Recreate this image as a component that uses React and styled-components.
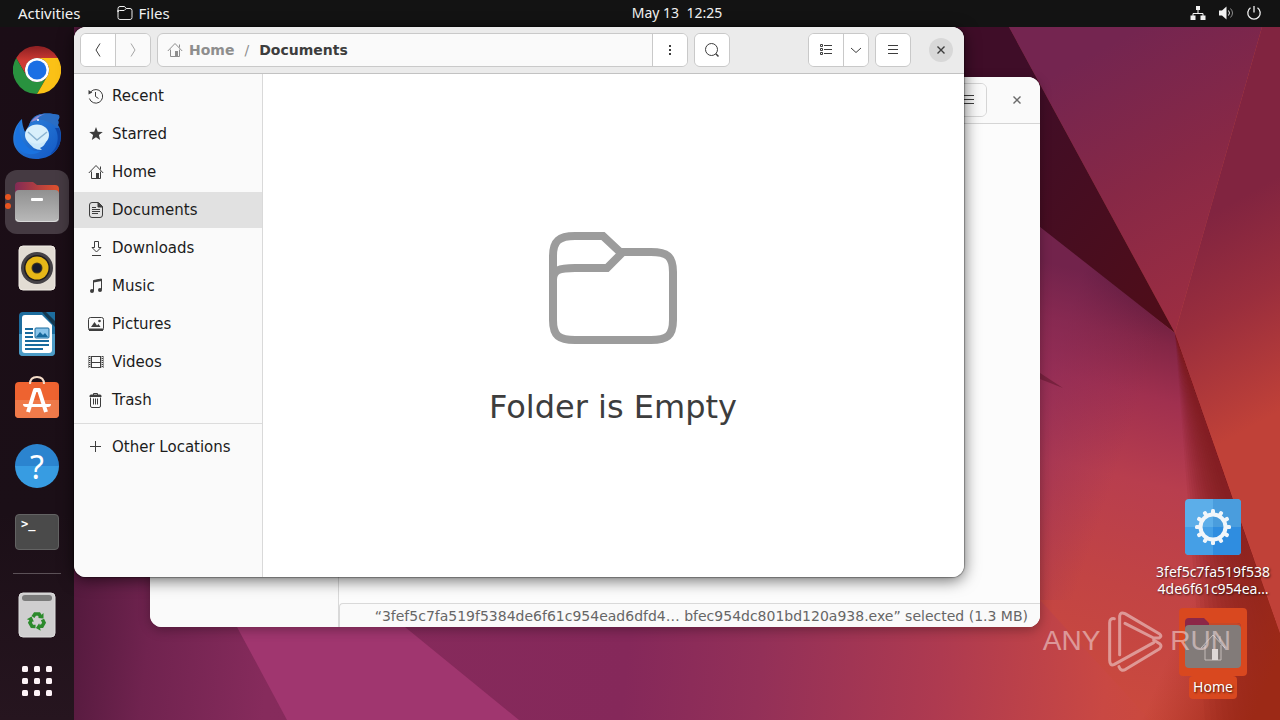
import React from 'react'
import styled, { createGlobalStyle } from 'styled-components'

const GlobalStyle = createGlobalStyle`
  * {
    box-sizing: border-box;
  }
  body {
    margin: 0;
    overflow: hidden;
    font-family: 'DejaVu Sans', sans-serif;
    font-size: 15px;
  }
  button {
    border: none;
    padding: 0;
    background: none;
    color: inherit;
    font: inherit;
  }
  a {
    color: inherit;
    text-decoration: none;
  }
  svg {
    display: block;
    flex-shrink: 0;
  }
`

const Screen = styled.div`
  position: relative;
  display: flex;
  flex-direction: column;
  height: 100vh;
  overflow: hidden;
`

const TopBar = styled.header`
  position: relative;
  display: grid;
  grid-template-columns: 1fr auto 1fr;
  align-items: center;
  height: 27px;
  padding: 0 18px 2px;
  background: #131313;
  color: #f2f2f2;
  font-family: 'Noto Sans', sans-serif;
  font-size: 15px;
  line-height: 20px;
`

const BarGroup = styled.div`
  display: flex;
  align-items: center;
  justify-content: ${({ $end }) => ($end ? 'flex-end' : 'flex-start')};
  gap: ${({ $end }) => ($end ? '12px' : '36px')};
`

const BarButton = styled.button`
  display: flex;
  align-items: center;
  gap: 6px;
`

const Clock = styled(BarButton)`
  margin-left: 74px;
  font-size: 14px;
  white-space: pre;
`

const Body = styled.div`
  position: relative;
  display: flex;
  flex: 1;
  min-height: 0;
`

const Dock = styled.nav`
  display: flex;
  flex-direction: column;
  align-items: center;
  gap: 2px;
  width: 74px;
  padding-top: 11px;
  background: linear-gradient(#1b0d16, #1b0f17 70%, #26151f);
`

const DockButton = styled.button`
  position: relative;
  display: flex;
  align-items: center;
  justify-content: center;
  width: 64px;
  height: 64px;
  border-radius: 12px;
  background: ${({ $active }) => ($active ? '#453a42' : 'transparent')};
`

const RunningDots = styled.span`
  position: absolute;
  left: 0;
  top: 24px;
  display: flex;
  flex-direction: column;
  gap: 3px;

  i {
    width: 6px;
    height: 6px;
    border-radius: 50%;
    background: #e95420;
  }
`

const DockLine = styled.hr`
  width: 48px;
  height: 1px;
  margin: 7px 0;
  border: none;
  background: #5b5157;
`

const Desktop = styled.main`
  position: relative;
  flex: 1;
`

const Wallpaper = styled.svg`
  position: absolute;
  inset: 0;
  width: 100%;
  height: 100%;
`

const Window = styled.section`
  position: absolute;
  left: ${({ $back }) => ($back ? '76px' : '0')};
  top: ${({ $back }) => ($back ? '50px' : '0')};
  display: flex;
  flex-direction: column;
  width: 890px;
  height: 550px;
  border-radius: 12px;
  overflow: hidden;
  background: #fff;
  color: #3d3d3d;
  box-shadow: ${({ $back }) =>
    $back
      ? '0 3px 12px rgba(0, 0, 0, 0.3)'
      : '0 0 1px 1px rgba(0, 0, 0, 0.3), 0 3px 16px rgba(0, 0, 0, 0.6)'};
`

const HeaderBar = styled.div`
  display: flex;
  align-items: center;
  gap: 6px;
  height: 47px;
  padding: 0 11px 0 6px;
  border-bottom: 1px solid ${({ $back }) => ($back ? '#d5d5d5' : '#c2c2c2')};
  background: ${({ $back }) => ($back ? '#fafafa' : '#ebebeb')};
`

const Group = styled.div`
  display: flex;
  flex: ${({ $grow }) => ($grow ? '0 1 531px' : 'none')};
  height: 34px;
  border: 1px solid ${({ $back }) => ($back ? '#d5d5d5' : '#c9c9c9')};
  border-radius: 6px;
  overflow: hidden;
  background: #fafafa;
`

const ToolButton = styled.button`
  box-sizing: content-box;
  display: flex;
  align-items: center;
  justify-content: center;
  width: ${({ $narrow }) => ($narrow ? '24px' : '34px')};
  background: ${({ $flat }) => ($flat ? '#fafafa' : '#fff')};
  color: ${({ disabled }) => (disabled ? '#a5a5a5' : '#3d3d3d')};

  &:not(:first-child) {
    border-left: 1px solid #c9c9c9;
  }
`

const Path = styled.div`
  display: flex;
  flex: 1;
  align-items: center;
  gap: 10px;
  padding-left: 9px;
  color: #8e8e8e;
  font-size: 14px;
  font-weight: 700;

  a {
    display: flex;
    align-items: center;
    gap: 6px;
  }
  span {
    font-weight: 400;
  }
  a:last-child {
    color: #3d3d3d;
  }
`

const Spacer = styled.div`
  flex: 1;
`

const CloseButton = styled.button`
  display: flex;
  align-items: center;
  justify-content: center;
  width: 24px;
  height: 24px;
  margin-left: 12px;
  border-radius: 50%;
  background: ${({ $back }) => ($back ? 'transparent' : '#d8d8d8')};
  color: ${({ $back }) => ($back ? '#6b6b6b' : '#3d3d3d')};
`

const Columns = styled.div`
  display: flex;
  flex: 1;
  min-height: 0;
`

const Sidebar = styled.nav`
  display: flex;
  flex-direction: column;
  gap: 2px;
  width: 189px;
  padding-top: 4px;
  border-right: 1px solid #d9d9d9;
  background: #fafafa;
`

const Place = styled.button`
  display: flex;
  align-items: center;
  gap: 8px;
  height: 36px;
  padding-left: 14px;
  background: ${({ $active }) => ($active ? '#e1e1e1' : 'transparent')};
  color: #1c1c1c;
  text-align: left;

  svg {
    color: #3d3d3d;
  }
`

const SideLine = styled.hr`
  width: 100%;
  height: 1px;
  margin: 3px 0;
  border: none;
  background: #dcdcdc;
`

const Pane = styled.div`
  display: flex;
  flex: 1;
  flex-direction: column;
  align-items: center;
  justify-content: ${({ $back }) => ($back ? 'flex-end' : 'center')};
  gap: 36px;
  min-width: 0;
  padding: ${({ $back }) => ($back ? '0' : '0 1px 1px 0')};
  background: ${({ $back }) => ($back ? '#fcfcfc' : '#fff')};
`

const EmptyText = styled.p`
  margin: 0;
  font-size: 32px;
  line-height: 38px;
`

const StatusBar = styled.div`
  display: flex;
  align-items: center;
  justify-content: flex-end;
  align-self: stretch;
  height: 24px;
  padding: 0 12px;
  border: solid #d9d9d9;
  border-width: 1px 0 0 1px;
  border-top-left-radius: 4px;
  background: #fafafa;
  color: #666;
  font-size: 14px;
  white-space: nowrap;
`

const DesktopIcons = styled.div`
  position: absolute;
  right: 3px;
  bottom: 21px;
  display: flex;
  flex-direction: column;
  gap: 11px;
  width: 128px;
`

const DesktopItem = styled.button`
  display: flex;
  flex-direction: column;
  align-items: center;
  gap: ${({ $selected }) => ($selected ? '0' : '8px')};
  color: #fff;
  font-family: 'Noto Sans', sans-serif;
  font-size: 14px;
  line-height: 17px;
  text-shadow: 1px 1px 2px rgba(0, 0, 0, 0.7);
`

const IconBox = styled.span`
  padding: ${({ $selected }) => ($selected ? '6px' : '0')};
  border-radius: 4px;
  background: ${({ $selected }) => ($selected ? '#d9481f' : 'transparent')};
`

const IconLabel = styled.span`
  padding: ${({ $selected }) => ($selected ? '2px 4px 4px' : '0')};
  border-radius: 4px;
  background: ${({ $selected }) => ($selected ? '#d9481f' : 'transparent')};
`

const Watermark = styled.div`
  position: absolute;
  right: 49px;
  bottom: 48px;
  display: flex;
  align-items: center;
  gap: 7px;
  color: #f3dcdc;
  font-family: 'Liberation Sans', sans-serif;
  font-size: 28px;
  line-height: 62px;
  opacity: 0.55;
  pointer-events: none;
`

// symbolic 16px icons, all drawn with currentColor
const glyphs = {
  back: <path d="M10 1.500 6 8l4 6.500" />,
  forward: <path d="M6 1.500 10 8l-4 6.500" />,
  home: (
    <>
      <path d="M.8 9 8 1.500 15.200 9M12.500 2.500v3M3.500 7.500v7h9v-7" />
      <path d="M8 9h3v6H8z" fill="currentColor" stroke="none" />
    </>
  ),
  dots: <path d="M7 3h2v2H7zM7 7h2v2H7zM7 11h2v2H7z" fill="currentColor" stroke="none" />,
  search: (
    <>
      <circle cx="7.500" cy="7.500" r="6" />
      <path d="m11.800 11.800 2.700 2.700" strokeWidth="1.500" />
    </>
  ),
  list: <path d="M2.500 2.500h2v2h-2zM2.500 6.500h2v2h-2zM2.500 10.500h2v2h-2zM6 3.500h8M6 7.500h8M6 11.500h8" />,
  down: <path d="m3 6 5 4.500L13 6" />,
  menu: <path d="M3 3.500h10M3 7.500h10M3 11.500h10" />,
  close: <path d="m4.500 4.500 7 7M11.500 4.500l-7 7" strokeWidth="1.400" />,
  recent: (
    <>
      <path d="M2.800 3.800A6.800 6.800 0 1 1 1.400 10.500" />
      <path d="M7.500 4v4.500l3 2" />
      <path d="M.5 2v4.500l3.800-2z" fill="currentColor" stroke="none" />
    </>
  ),
  star: (
    <path
      d="m8 1 1.800 4.700 5 .2-3.900 3.200 1.300 4.900L8 11.200 3.800 14l1.300-4.900L1.200 5.900l5-.2z"
      fill="currentColor"
      stroke="none"
    />
  ),
  documents: (
    <>
      <path d="M4 .5h6.500l4 4V13q0 2.500-2.500 2.500H4q-2.500 0-2.500-2.500V3Q1.500.5 4 .5z" />
      <path d="M10 1v4h4.500z" fill="currentColor" />
      <path d="M4 5.500h4M4 7.500h8M4 9.500h8M4 11.500h6" />
    </>
  ),
  downloads: <path d="M6.500 1.500h4v6H13l-4.500 4.500L4 7.500h2.500zM4 15.500h9" />,
  music: (
    <>
      <path d="M5.500 13V2.500l8-1.500v10.500" />
      <path d="m5.500 3.500 8-1.500" strokeWidth="2" />
      <circle cx="4" cy="13" r="2" fill="currentColor" stroke="none" />
      <circle cx="12" cy="12" r="2" fill="currentColor" stroke="none" />
    </>
  ),
  pictures: (
    <>
      <rect x=".5" y="1.500" width="15" height="13" rx="2" />
      <path d="M1 12.500h14V15H1zM3 11l3.500-5L9 9.500l1.500-1.500L12.500 11z" fill="currentColor" stroke="none" />
      <circle cx="11.500" cy="5" r="1.300" fill="currentColor" stroke="none" />
    </>
  ),
  videos: (
    <>
      <path d="M3.500 2v12M12.500 2v12M3.500 2.500h9M3.500 8.500h9M3.500 13.500h9" />
      <path d="M1.500 2v12M14.500 2v12" strokeWidth="2" />
      <path d="M1.800 3v11M14.200 3v11" stroke="#fafafa" strokeWidth="1.400" strokeDasharray="1 1" />
    </>
  ),
  trash: (
    <>
      <path d="M2.500 5.500V14q0 1.500 1.500 1.500h7q1.500 0 1.500-1.500V5.500M5.500 6.500v6M7.500 6.500v6M9.500 6.500v6" />
      <path d="M5.500 3V1.500h4V3" />
      <path d="M1.500 5V4q0-1.500 1.500-1.500h9q1.500 0 1.500 1.500v1z" fill="currentColor" stroke="none" />
    </>
  ),
  plus: <path d="M7.500 2v11M2 7.500h11" />,
  folder: (
    <path d="M1 5v7.500q0 2 2 2h10q2 0 2-2V5.500q0-2-2-2H9.200L7.500 1.500H3q-2 0-2 2V7q0-1.500 1.500-1.500h4.700L9.200 3.500" />
  ),
  network: (
    <>
      <path d="M8 5v3M3 11V8.500h10V11" />
      <path d="M6 1h4v4H6zM.5 10.500h5V15h-5zM10.500 10.500h5V15h-5z" fill="currentColor" stroke="none" />
    </>
  ),
  volume: (
    <>
      <path d="M1 5.500h3L8.500 1.500v13L4 10.500H1z" fill="currentColor" stroke="none" />
      <path d="M10.500 5.500q2 2.500 0 5" />
      <path d="M12.500 3.500q4 4.500 0 9" opacity=".55" />
    </>
  ),
  power: <path d="M8 1v6.500M4.500 2.800a6.200 6.200 0 1 0 7 0" strokeWidth="1.300" />,
}

const Glyph = ({ name }) => (
  <svg width="16" height="16" viewBox="0 0 16 16" fill="none" stroke="currentColor" aria-hidden="true">
    {glyphs[name]}
  </svg>
)

const ChromeIcon = () => (
  <svg width="48" height="48" viewBox="0 0 48 48">
    <defs>
      <linearGradient id="chromeRed" x1="0" y1="0" x2="0" y2="1">
        <stop offset="0" stopColor="#8b1f22" />
        <stop offset=".5" stopColor="#cf3a33" />
      </linearGradient>
    </defs>
    <path d="M3.200 12A24 24 0 0 1 44.800 12H24a12 12 0 0 0-10.400 18z" fill="url(#chromeRed)" />
    <path d="M3.200 12l10.400 18a12 12 0 0 0 20.800 0L24 48A24 24 0 0 1 3.200 12z" fill="#29923f" />
    <path d="M24 12h20.800A24 24 0 0 1 24 48l10.400-18A12 12 0 0 0 24 12z" fill="#fbc116" />
    <circle cx="24" cy="24" r="12" fill="#fff" />
    <circle cx="24" cy="24" r="9.500" fill="#1b6fe4" />
  </svg>
)

const ThunderbirdIcon = () => (
  <svg width="48" height="48" viewBox="0 0 48 48">
    <defs>
      <linearGradient id="bird" x1="0" y1="0" x2="1" y2="1">
        <stop offset="0" stopColor="#2f86dd" />
        <stop offset="1" stopColor="#1257c4" />
      </linearGradient>
    </defs>
    <path d="M9 7C1 14-2 27 2 35c4 8 12 12 21 12 14 0 25-9 25-23 0-5-1-8-3-11 1-2 1-3 0-5q2-2 1-5C41 2 34 1 29 2 21 3 18 8 16 13l-4 7C10 15 9 11 9 7z" fill="url(#bird)" />
    <path d="M46 3C41 2 34 1 29 2 21 3 18 8 16 13q8-8 17-4 8 3 12 8l0-9q2-2 1-5z" fill="#2a6dc4" />
    <path d="M18 10q4-7 14-8-7 2-8 6z" fill="#8f8cd4" />
    <path d="M9 7C5 15 6 25 11 31c4 6 10 9 17 8-9 6-20 3-24-5C0 26 3 13 9 7z" fill="#1a73e0" />
    <path d="M42 16c5 8 3 20-5 26 10-3 13-16 9-26z" fill="#0e48ab" />
    <ellipse cx="24" cy="23" rx="12" ry="10.500" fill="#d8effb" />
    <path d="M14 28q9 7 19 1-1 5-6 7 0 0 2 2-10 0-15-10z" fill="#cbe8fa" />
    <path d="m15 20 9 8 10-8" fill="none" stroke="#8bb4d2" strokeWidth="1.500" />
    <circle cx="25" cy="8" r="1" fill="#fff" />
  </svg>
)

const FolderIcon = () => (
  <svg width="44" height="42" viewBox="0 0 44 42">
    <defs>
      <linearGradient id="tab" x1="0" x2="1">
        <stop offset="0" stopColor="#812a55" />
        <stop offset="1" stopColor="#e0522c" />
      </linearGradient>
      <linearGradient id="drawer" x1="0" y1="0" x2="0" y2="1">
        <stop offset="0" stopColor="#909090" />
        <stop offset="1" stopColor="#b9b9b9" />
      </linearGradient>
    </defs>
    <path d="M0 5q0-4 4-4h14l4 3h18q4 0 4 4v18H0z" fill="url(#tab)" />
    <rect y="9" width="44" height="32" rx="4" fill="url(#drawer)" />
    <path d="M1 38q1 2.500 4 2.500h34q3 0 4-2.500" fill="none" stroke="#dadada" />
    <rect x="16" y="17" width="12" height="3" rx="1" fill="#fff" />
  </svg>
)

const RhythmboxIcon = () => (
  <svg width="38" height="46" viewBox="0 0 38 46">
    <rect x="1" y="1" width="36" height="44" rx="4" fill="#e2dcd3" stroke="#f2ede6" />
    <circle cx="19" cy="23" r="16" fill="#454246" />
    <circle cx="19" cy="23" r="13" fill="#201d1f" />
    <circle cx="19" cy="23" r="11.500" fill="#e6b717" />
    <circle cx="19" cy="23" r="5.500" fill="#4a3d1c" />
    <circle cx="19" cy="23" r="4.500" fill="#161a2c" />
  </svg>
)

const WriterIcon = () => (
  <svg width="38" height="46" viewBox="0 0 38 46">
    <path d="M5 1h32v40q0 4-4 4H5q-4 0-4-4V5q0-4 4-4z" fill="#1d6d9e" />
    <path d="M1 23v18q0 4 4 4h28q4 0 4-4V23z" fill="#4c9bc6" />
    <path d="M24 1h4l9 9v6z" fill="#14384f" />
    <path d="M7 4h17l10 10v25q0 3-3 3H7q-3 0-3-3V7q0-3 3-3z" fill="#fff" />
    <path d="M7 18h8M7 22h8M7 26h8M7 30h24M7 34h24M7 38h18" stroke="#186a9d" strokeWidth="2" />
    <rect x="17" y="17" width="14" height="10" rx="1" fill="#8bc5ea" stroke="#186a9d" />
    <path d="m18 26 4-5 3 3 2-2 3 4z" fill="#186a9d" />
  </svg>
)

const SoftwareIcon = () => (
  <svg width="44" height="48" viewBox="0 0 44 48">
    <rect y="6" width="44" height="36" rx="4" fill="#ee6330" />
    <path d="M0 24h44v14q0 4-4 4H4q-4 0-4-4z" fill="#ef7a4a" />
    <path d="M15 8q0-7 7-7t7 7" fill="none" stroke="#f4dcc8" strokeWidth="2" />
    <path d="m13 36 7-22h4l7 22" fill="none" stroke="#fff" strokeWidth="4" strokeLinejoin="round" />
    <path d="M8 28h28q0 3-3 3H11q-3 0-3-3z" fill="#fff" />
  </svg>
)

const HelpText = styled.span`
  display: flex;
  align-items: center;
  justify-content: center;
  width: 44px;
  height: 44px;
  border-radius: 50%;
  background: linear-gradient(#2b84cf 50%, #379ce2 50%);
  color: #fff;
  font-family: 'Noto Sans', sans-serif;
  font-size: 32px;
`

const TerminalBox = styled.span`
  width: 44px;
  height: 36px;
  padding: 2px 5px;
  border: 1px solid #636363;
  border-radius: 4px;
  background: #4a4a4a;
  color: #fff;
  font-family: 'DejaVu Sans Mono', monospace;
  font-size: 12px;
  font-weight: 700;
  line-height: 14px;
  text-align: left;
`

const TrashIcon = () => (
  <svg width="38" height="46" viewBox="0 0 38 46">
    <rect x="1" y="1" width="36" height="44" rx="4" fill="#cfcecf" stroke="#dedede" />
    <rect x="4" y="3" width="30" height="6" rx="3" fill="#7b7b7b" />
    {[0, 120, 240].map((turn) => (
      <g key={turn} transform={`rotate(${turn} 19 29)`}>
        <path d="m15 25 2-3h4l1.500 2.500" fill="none" stroke="#2b8a2b" strokeWidth="3.500" />
        <path d="m20 26 5.500.5V21z" fill="#2b8a2b" />
      </g>
    ))}
  </svg>
)

const AppsIcon = () => (
  <svg width="30" height="30" viewBox="0 0 30 30" fill="#fdf3f7">
    {[0, 12, 24].map((y) => [0, 12, 24].map((x) => <rect key={`${x}-${y}`} x={x} y={y} width="6" height="6" rx="1.500" />))}
  </svg>
)

const GearIcon = () => (
  <svg width="56" height="56" viewBox="0 0 56 56">
    <rect width="56" height="56" rx="4" fill="#5caee9" />
    <path d="M28 0h24q4 0 4 4v24H28z" fill="#4a9ddd" />
    <path d="M28 28h28v24q0 4-4 4H28z" fill="#2f8de0" />
    <path d="M0 28h28v28H4q-4 0-4-4z" fill="#459fe6" />
    <circle cx="28" cy="28" r="12.500" fill="none" stroke="#f1f6fa" strokeWidth="4" />
    {[...Array(12)].map((_, i) => (
      <rect key={i} x="26" y="10" width="4" height="5" rx="1.500" fill="#f1f6fa" transform={`rotate(${i * 30} 28 28)`} />
    ))}
  </svg>
)

const HomeFolderIcon = () => (
  <svg width="56" height="56" viewBox="0 0 56 56">
    <path d="M0 8q0-4 4-4h15l5 5h28q4 0 4 4v12H0z" fill="#8c2747" />
    <path d="M24 9h28q4 0 4 4v8H24z" fill="#c74828" />
    <rect y="11" width="56" height="43" rx="4" fill="#827b79" />
    <path d="m16 34 12-13 12 13M35 22v6M20 31v15h16V31" fill="none" stroke="#c4bcb9" />
    <path d="M27 35h6v11h-6z" fill="#ded8d6" />
  </svg>
)

const EmptyFolder = () => (
  <svg width="128" height="128" viewBox="0 0 128 128" fill="none" stroke="#9c9c9c" strokeWidth="8">
    <path d="M4 52V96C4 112 10 116 26 116H102C118 116 124 112 124 96V48C124 32 118 28 102 28H71L54 12H26C10 12 4 17 4 32V56" />
    <path d="M4 56C4 46 10 44 26 44H58L74 28" />
  </svg>
)

const PlayMark = () => (
  <svg width="56" height="62" viewBox="0 0 168 186" fill="none" stroke="#f3dcdc" strokeWidth="9" strokeLinejoin="round" strokeLinecap="round">
    <path d="M22 26Q8 24 8 38V150Q8 170 22 163L140 98" />
    <path d="M38 134V18Q40 4 54 11L158 72Q166 80 156 84H140L54 40" />
    <path d="M36 170Q42 186 56 178L158 116Q166 108 158 101L140 90" />
  </svg>
)

// the fold under the right facet darkens as a fan of thin triangles from one point
const foldSteps = [...Array(16)].map((_, i) => 1205 + i * 6)

const Backdrop = () => (
  <Wallpaper viewBox="0 0 1280 720" preserveAspectRatio="xMidYMid slice" aria-hidden="true">
    <defs>
      <linearGradient id="base" gradientUnits="userSpaceOnUse" x1="74" y1="600" x2="1180" y2="720">
        <stop offset="0" stopColor="#551a3e" />
        <stop offset=".07" stopColor="#70234f" />
        <stop offset=".18" stopColor="#862b5c" />
        <stop offset=".5" stopColor="#85285a" />
        <stop offset=".62" stopColor="#933058" />
        <stop offset=".78" stopColor="#ae3a50" />
        <stop offset=".93" stopColor="#c94843" />
        <stop offset="1" stopColor="#cb4a3b" />
      </linearGradient>
      <linearGradient id="lower" gradientUnits="userSpaceOnUse" x1="1110" y1="278" x2="1010" y2="690">
        <stop offset="0" stopColor="#5a1a3b" />
        <stop offset=".12" stopColor="#832646" />
        <stop offset=".25" stopColor="#a0304f" />
        <stop offset=".45" stopColor="#b83e4e" />
        <stop offset=".7" stopColor="#c24444" />
        <stop offset="1" stopColor="#cb4a3d" />
      </linearGradient>
      <linearGradient id="lowerFade" gradientUnits="userSpaceOnUse" x1="1040" y1="400" x2="1130" y2="430">
        <stop offset="0" stopColor="#8a2c5c" stopOpacity=".5" />
        <stop offset="1" stopColor="#8a2c5c" stopOpacity="0" />
      </linearGradient>
      <linearGradient id="wedge" x1="0" y1="0" x2="1" y2="1">
        <stop offset=".3" stopColor="#3f0d28" />
        <stop offset="1" stopColor="#500d18" />
      </linearGradient>
      <linearGradient id="upper" gradientUnits="userSpaceOnUse" x1="1080" y1="60" x2="1210" y2="300">
        <stop offset="0" stopColor="#742550" />
        <stop offset=".5" stopColor="#872846" />
        <stop offset="1" stopColor="#9b2d42" />
      </linearGradient>
      <linearGradient id="right" gradientUnits="userSpaceOnUse" x1="1200" y1="220" x2="1300" y2="400">
        <stop offset="0" stopColor="#812440" />
        <stop offset=".45" stopColor="#9a2e3d" />
        <stop offset="1" stopColor="#c04138" />
      </linearGradient>
      <linearGradient id="corner" gradientUnits="userSpaceOnUse" x1="1175" y1="640" x2="1270" y2="680">
        <stop offset="0" stopColor="#a62d1c" stopOpacity="0" />
        <stop offset="1" stopColor="#9c2916" />
      </linearGradient>
    </defs>
    <rect width="1280" height="720" fill="url(#base)" />
    <path d="M237 627H405L519 720H287z" fill="#a0366f" />
    <path d="M1009 27H1262L1175 333z" fill="url(#upper)" />
    <path d="M900 27H1009L1175 333 900 127z" fill="url(#wedge)" />
    <path d="M1040 227 1175 333 1280 633V720H1150L1040 600z" fill="url(#lower)" />
    <path d="M1040 227 1175 333V600H1040z" fill="url(#lowerFade)" />
    {foldSteps.map((x) => (
      <path key={x} d={`M1175 333 1310 720H${x}z`} fill="#7d1c20" opacity=".1" />
    ))}
    <path d="M1226 480 1280 633V720H1100z" fill="url(#corner)" />
    <path d="M1262 27H1280V633L1175 333z" fill="url(#right)" />
    <path d="M1040 373 1063 388 1040 379z" fill="#78223f" />
  </Wallpaper>
)

const places = [
  ['recent', 'Recent'],
  ['star', 'Starred'],
  ['home', 'Home'],
  ['documents', 'Documents'],
  ['downloads', 'Downloads'],
  ['music', 'Music'],
  ['pictures', 'Pictures'],
  ['videos', 'Videos'],
  ['trash', 'Trash'],
]

const App = () => {
  return (
    <Screen>
      <GlobalStyle />
      <Backdrop />
      <TopBar>
        <BarGroup>
          <BarButton>Activities</BarButton>
          <BarButton><Glyph name="folder" />Files</BarButton>
        </BarGroup>
        <Clock>{'May 13  12:25'}</Clock>
        <BarGroup $end>
          <Glyph name="network" />
          <Glyph name="volume" />
          <Glyph name="power" />
        </BarGroup>
      </TopBar>
      <Body>
        <Dock>
          <DockButton aria-label="Chrome"><ChromeIcon /></DockButton>
          <DockButton aria-label="Thunderbird"><ThunderbirdIcon /></DockButton>
          <DockButton aria-label="Files" $active>
            <RunningDots><i /><i /></RunningDots>
            <FolderIcon />
          </DockButton>
          <DockButton aria-label="Rhythmbox"><RhythmboxIcon /></DockButton>
          <DockButton aria-label="Writer"><WriterIcon /></DockButton>
          <DockButton aria-label="Software"><SoftwareIcon /></DockButton>
          <DockButton aria-label="Help"><HelpText>?</HelpText></DockButton>
          <DockButton aria-label="Terminal"><TerminalBox>&gt;_</TerminalBox></DockButton>
          <DockLine />
          <DockButton aria-label="Trash"><TrashIcon /></DockButton>
          <DockButton aria-label="Show Applications"><AppsIcon /></DockButton>
        </Dock>
        <Desktop>
          <DesktopIcons>
            <DesktopItem>
              <IconBox><GearIcon /></IconBox>
              <IconLabel>3fef5c7fa519f538<br />4de6f61c954ea…</IconLabel>
            </DesktopItem>
            <DesktopItem $selected>
              <IconBox $selected><HomeFolderIcon /></IconBox>
              <IconLabel $selected>Home</IconLabel>
            </DesktopItem>
          </DesktopIcons>
          <Window $back>
            <HeaderBar $back>
              <Spacer />
              <Group $back>
                <ToolButton aria-label="Menu" $flat><Glyph name="menu" /></ToolButton>
              </Group>
              <CloseButton aria-label="Close" $back><Glyph name="close" /></CloseButton>
            </HeaderBar>
            <Columns>
              <Sidebar />
              <Pane $back>
                <StatusBar>“3fef5c7fa519f5384de6f61c954ead6dfd4… bfec954dc801bd120a938.exe” selected (1.3 MB)</StatusBar>
              </Pane>
            </Columns>
          </Window>
          <Window>
            <HeaderBar>
              <Group>
                <ToolButton aria-label="Back"><Glyph name="back" /></ToolButton>
                <ToolButton aria-label="Forward" disabled $flat><Glyph name="forward" /></ToolButton>
              </Group>
              <Group $grow>
                <Path>
                  <a href="#home"><Glyph name="home" />Home</a>
                  <span>/</span>
                  <a href="#documents">Documents</a>
                </Path>
                <ToolButton aria-label="Folder menu"><Glyph name="dots" /></ToolButton>
              </Group>
              <Group>
                <ToolButton aria-label="Search"><Glyph name="search" /></ToolButton>
              </Group>
              <Spacer />
              <Group>
                <ToolButton aria-label="List view"><Glyph name="list" /></ToolButton>
                <ToolButton aria-label="View options" $narrow><Glyph name="down" /></ToolButton>
              </Group>
              <Group>
                <ToolButton aria-label="Menu"><Glyph name="menu" /></ToolButton>
              </Group>
              <CloseButton aria-label="Close"><Glyph name="close" /></CloseButton>
            </HeaderBar>
            <Columns>
              <Sidebar>
                {places.map(([icon, label]) => (
                  <Place key={label} $active={label === 'Documents'}>
                    <Glyph name={icon} />
                    {label}
                  </Place>
                ))}
                <SideLine />
                <Place><Glyph name="plus" />Other Locations</Place>
              </Sidebar>
              <Pane>
                <EmptyFolder />
                <EmptyText>Folder is Empty</EmptyText>
              </Pane>
            </Columns>
          </Window>
          <Watermark>
            <span>ANY</span>
            <PlayMark />
            <span>RUN</span>
          </Watermark>
        </Desktop>
      </Body>
    </Screen>
  )
}

export default App
